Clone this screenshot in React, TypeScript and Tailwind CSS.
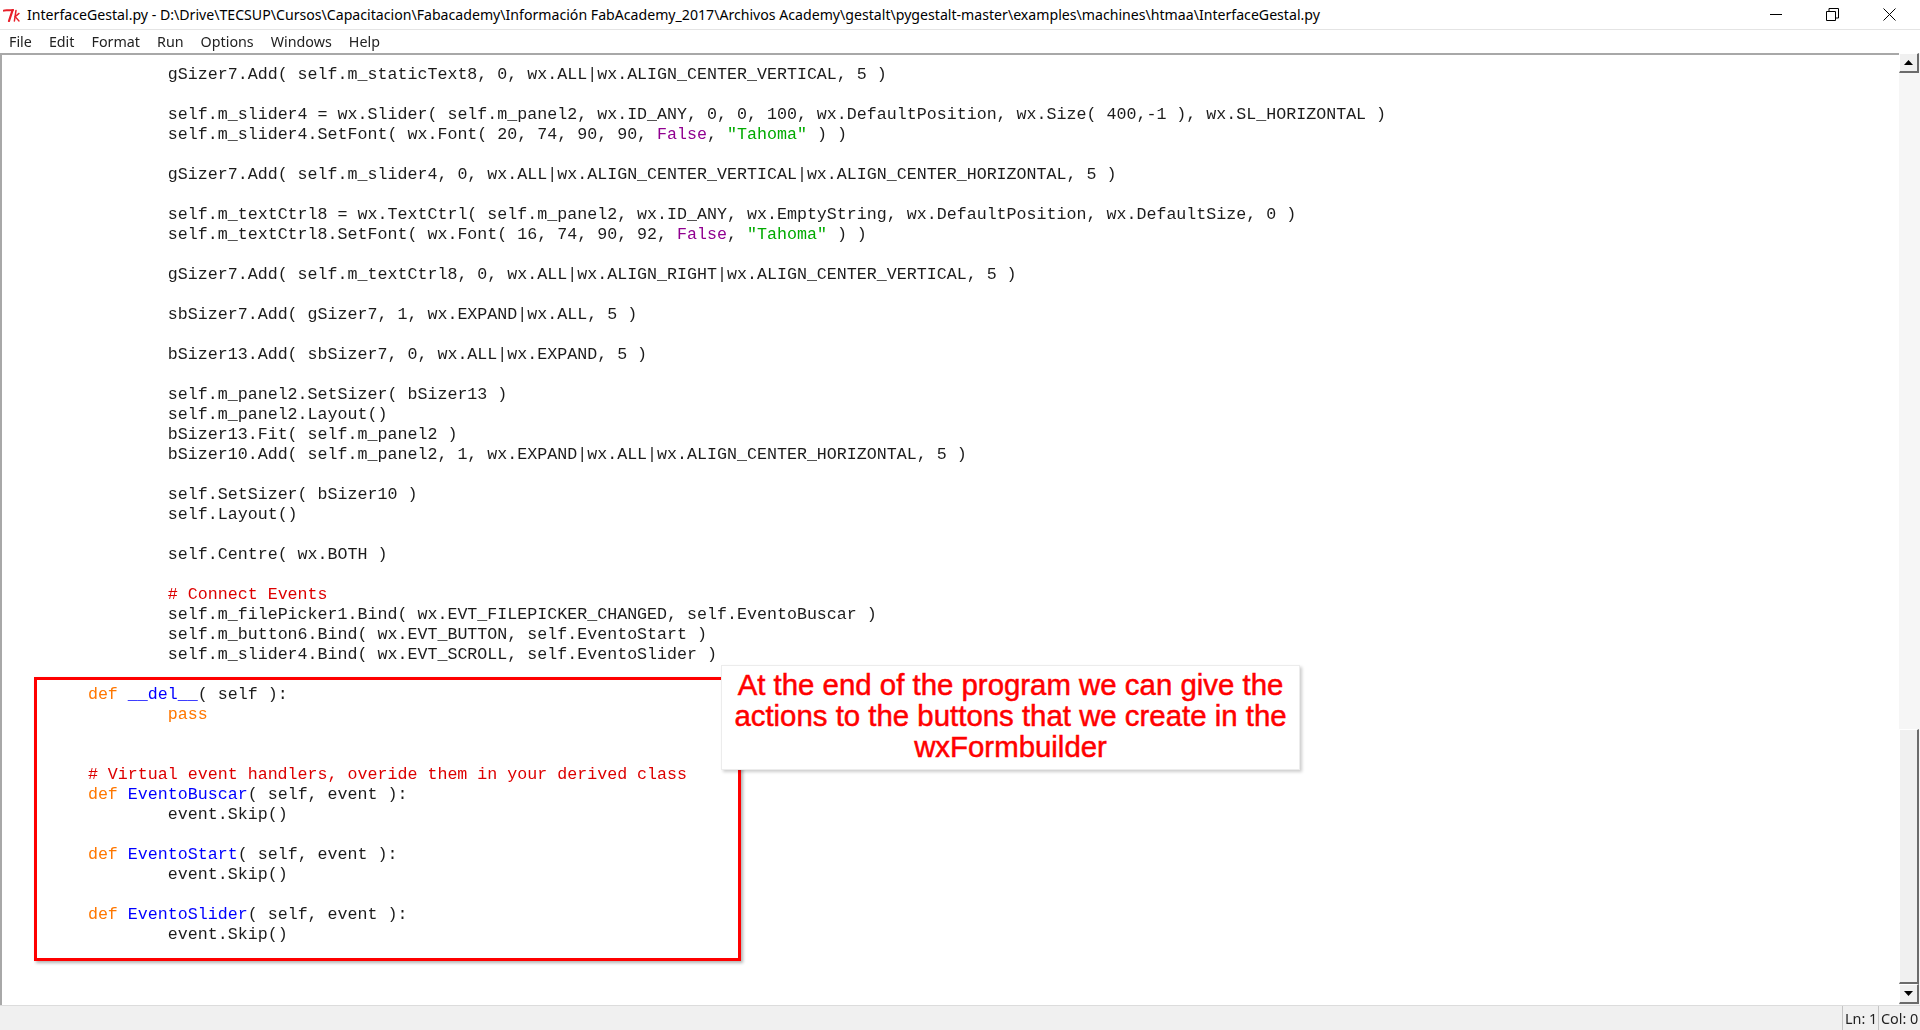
import type { ReactNode } from 'react';

const kw = (s: string) => <span className="text-[#ff7700]">{s}</span>;
const fn = (s: string) => <span className="text-[#0000ff]">{s}</span>;
const cm = (s: string) => <span className="text-[#dd0000]">{s}</span>;
const st = (s: string) => <span className="text-[#00aa00]">{s}</span>;
const bi = (s: string) => <span className="text-[#900090]">{s}</span>;

// source lines of the editor, one entry per row
const lines: ReactNode[] = [
  '\t\tgSizer7.Add( self.m_staticText8, 0, wx.ALL|wx.ALIGN_CENTER_VERTICAL, 5 )',
  '',
  '\t\tself.m_slider4 = wx.Slider( self.m_panel2, wx.ID_ANY, 0, 0, 100, wx.DefaultPosition, wx.Size( 400,-1 ), wx.SL_HORIZONTAL )',
  <>{'\t\tself.m_slider4.SetFont( wx.Font( 20, 74, 90, 90, '}{bi('False')}{', '}{st('"Tahoma"')}{' ) )'}</>,
  '',
  '\t\tgSizer7.Add( self.m_slider4, 0, wx.ALL|wx.ALIGN_CENTER_VERTICAL|wx.ALIGN_CENTER_HORIZONTAL, 5 )',
  '',
  '\t\tself.m_textCtrl8 = wx.TextCtrl( self.m_panel2, wx.ID_ANY, wx.EmptyString, wx.DefaultPosition, wx.DefaultSize, 0 )',
  <>{'\t\tself.m_textCtrl8.SetFont( wx.Font( 16, 74, 90, 92, '}{bi('False')}{', '}{st('"Tahoma"')}{' ) )'}</>,
  '',
  '\t\tgSizer7.Add( self.m_textCtrl8, 0, wx.ALL|wx.ALIGN_RIGHT|wx.ALIGN_CENTER_VERTICAL, 5 )',
  '',
  '\t\tsbSizer7.Add( gSizer7, 1, wx.EXPAND|wx.ALL, 5 )',
  '',
  '\t\tbSizer13.Add( sbSizer7, 0, wx.ALL|wx.EXPAND, 5 )',
  '',
  '\t\tself.m_panel2.SetSizer( bSizer13 )',
  '\t\tself.m_panel2.Layout()',
  '\t\tbSizer13.Fit( self.m_panel2 )',
  '\t\tbSizer10.Add( self.m_panel2, 1, wx.EXPAND|wx.ALL|wx.ALIGN_CENTER_HORIZONTAL, 5 )',
  '',
  '\t\tself.SetSizer( bSizer10 )',
  '\t\tself.Layout()',
  '',
  '\t\tself.Centre( wx.BOTH )',
  '',
  <>{'\t\t'}{cm('# Connect Events')}</>,
  '\t\tself.m_filePicker1.Bind( wx.EVT_FILEPICKER_CHANGED, self.EventoBuscar )',
  '\t\tself.m_button6.Bind( wx.EVT_BUTTON, self.EventoStart )',
  '\t\tself.m_slider4.Bind( wx.EVT_SCROLL, self.EventoSlider )',
  '',
  <>{'\t'}{kw('def')} {fn('__del__')}{'( self ):'}</>,
  <>{'\t\t'}{kw('pass')}</>,
  '',
  '',
  <>{'\t'}{cm('# Virtual event handlers, overide them in your derived class')}</>,
  <>{'\t'}{kw('def')} {fn('EventoBuscar')}{'( self, event ):'}</>,
  '\t\tevent.Skip()',
  '',
  <>{'\t'}{kw('def')} {fn('EventoStart')}{'( self, event ):'}</>,
  '\t\tevent.Skip()',
  '',
  <>{'\t'}{kw('def')} {fn('EventoSlider')}{'( self, event ):'}</>,
  '\t\tevent.Skip()',
];

function TkLogo() {
  return (
    <svg width="17" height="13" viewBox="0 0 17 13" fill="none" stroke="#e8202a" strokeLinecap="round">
      <path d="M.8 1.6 C3 .4 7 2 10 .9" strokeWidth="2" />
      <path d="M9.6 1.2 L6 12" strokeWidth="2.2" />
      <path d="M13 1.4 L11.4 12" strokeWidth="1.5" />
      <path d="M16 4.4 L12.2 7.6 L16 12" strokeWidth="1.4" />
    </svg>
  );
}

function WindowControls() {
  return (
    <div className="flex items-center">
      <svg width="13" height="13" viewBox="0 0 13 13" className="mr-[43px]" stroke="#000" fill="none">
        <path d="M0 6.5H12" />
      </svg>
      <svg width="13" height="13" viewBox="0 0 13 13" className="mr-[44px]" stroke="#000" fill="none">
        <path d="M.5 3.5h9v9h-9z" />
        <path d="M3 3.5V.5h9.5v9.5H9.5" />
      </svg>
      <svg width="13" height="13" viewBox="0 0 13 13" className="mr-[24px]" stroke="#000" fill="none">
        <path d="M.5 .5l12 12M12.5 .5l-12 12" />
      </svg>
    </div>
  );
}

function ScrollButton({ up }: { up: boolean }) {
  return (
    <div className="flex h-[20px] w-[20px] items-center justify-center border-r-2 border-b-2 border-r-[#6b6b6b] border-b-[#6b6b6b] border-l border-t border-l-white border-t-white bg-[#f0f0f0]">
      <svg width="9" height="5" viewBox="0 0 9 5" fill="#000">
        <path d={up ? 'M4.5 0L9 5H0z' : 'M0 0H9L4.5 5z'} />
      </svg>
    </div>
  );
}

export default function App() {
  return (
    <div className="relative flex h-[1030px] w-[1920px] flex-col overflow-hidden bg-white font-['Noto_Sans',sans-serif] text-black">
      {/* title bar */}
      <div className="flex h-[29px] shrink-0 items-center justify-between">
        <div className="flex items-center pl-[3px] pt-[1px]">
          <TkLogo />
          <span className="ml-[7px] whitespace-nowrap text-[14.13px] leading-none">
            InterfaceGestal.py - D:\Drive\TECSUP\Cursos\Capacitacion\Fabacademy\Información FabAcademy_2017\Archivos Academy\gestalt\pygestalt-master\examples\machines\htmaa\InterfaceGestal.py
          </span>
        </div>
        <WindowControls />
      </div>

      {/* menu */}
      <div className="flex h-[24px] shrink-0 items-center gap-[17px] border-t border-[#e4e4e4] pl-[9px] text-[14.3px] text-[#222] blur-[0.3px]">
        {['File', 'Edit', 'Format', 'Run', 'Options', 'Windows', 'Help'].map((m) => (
          <span key={m}>{m}</span>
        ))}
      </div>

      {/* editor + scrollbar */}
      <div className="flex min-h-0 flex-1">
        <div className="min-w-0 flex-1 overflow-hidden border-t-2 border-l-2 border-t-[#a8a8a8] border-l-[#a8a8a8] pt-[10px] pl-[6px] font-['Liberation_Mono',monospace] text-[16.65px] leading-[20px] text-[#1c1c1c] [tab-size:8] blur-[0.35px]">
          {lines.map((line, i) => (
            <div key={i} className="h-[20px] whitespace-pre">
              {line}
            </div>
          ))}
        </div>
        <div className="flex w-[21px] shrink-0 flex-col bg-[#f4f4f4]">
          <ScrollButton up />
          <div className="h-[656px] bg-[#f6f6f6]" />
          <div className="h-[255px] w-[20px] border-r-2 border-b-2 border-r-[#6b6b6b] border-b-[#6b6b6b] border-l border-t border-l-white border-t-white bg-[#f0f0f0]" />
          <ScrollButton up={false} />
        </div>
      </div>

      {/* status bar */}
      <div className="flex h-[25px] shrink-0 items-stretch justify-end gap-[2px] border-t border-[#dcdcdc] bg-[#f0f0f0] pr-[2px] text-[14.4px] leading-[25px] text-[#222]">
        <div className="w-[34px] border-l border-[#c4c4c4] pl-[2px] whitespace-nowrap blur-[0.3px]">Ln: 1</div>
        <div className="w-[40px] border-l border-[#c4c4c4] pl-[2px] whitespace-nowrap blur-[0.3px]">Col: 0</div>
      </div>

      {/* annotation over the code */}
      <div className="absolute top-[677px] left-[34px] h-[284px] w-[707px] border-[3px] border-[#ff0000] shadow-[2px_2px_3px_rgba(0,0,0,0.3)]" />
      <div className="absolute top-[665px] left-[721px] flex h-[105px] w-[579px] items-center justify-center border border-[#ececec] bg-white pb-[4px] text-center font-['Liberation_Sans',sans-serif] text-[29.4px] leading-[31.3px] text-[#ff0000] shadow-[2px_2px_3px_rgba(0,0,0,0.2)] [-webkit-text-stroke:0.5px_#ff0000]">
        <div className="w-[570px]">At the end of the program we can give the actions to the buttons that we create in the wxFormbuilder</div>
      </div>
    </div>
  );
}
